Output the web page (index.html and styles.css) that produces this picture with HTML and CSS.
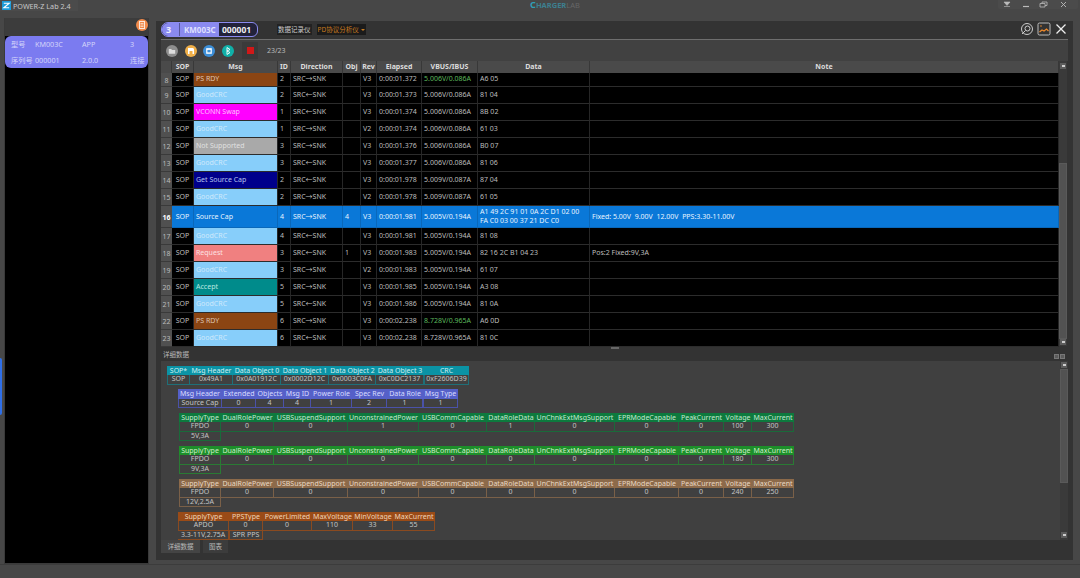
FILE: index.html
```html
<!DOCTYPE html>
<html>
<head>
  <title>POWER-Z Lab 2.4</title>
  <link rel="stylesheet" href="styles.css">
</head>
<body>
  <div class="titlebar">
    <div class="app-tab">
      <svg class="app-logo" viewBox="0 0 10 10"><rect width="10" height="10" fill="#1c9bd8"/><path d="M2 2.5H8L2 7.5H8" fill="none" stroke="#fff" stroke-width="1.2"/></svg>
      <span>POWER-Z Lab 2.4</span>
    </div>
    <div class="brand"><span class="brand-c">C</span><span class="brand-h">HARGER</span><span class="brand-l">LAB</span></div>
    <div class="win-btns">
      <svg viewBox="0 0 80 10">
        <path d="M6 2H12L9 5.5Z M6 6.5H12" fill="#bbb" stroke="#bbb" stroke-width=".6"/>
        <path d="M25 6.5H31" stroke="#bbb" stroke-width="1.2"/>
        <path d="M42 3.5H47V7H42Z M44 3.5V2H49V5.500H47" fill="none" stroke="#bbb" stroke-width=".8"/>
        <path d="M63 2L68 7M68 2L63 7" stroke="#bbb" stroke-width=".9"/>
      </svg>
    </div>
  </div>

  <div class="main">
    <aside class="side">
      <div class="side-head">
        <svg class="side-icon" viewBox="0 0 12 12"><circle cx="6" cy="6" r="6" fill="#f08a4b"/><rect x="3.400" y="2.600" width="5.200" height="6.800" fill="none" stroke="#fff" stroke-width=".8"/><path d="M4.500 4.500H7.500M4.500 6H7.500M4.500 7.500H7.500" stroke="#fff" stroke-width=".6"/></svg>
      </div>
      <div class="device-card">
        <span>型号</span><span>KM003C</span><span>APP</span><span>3</span>
        <span>序列号</span><span>000001</span><span>2.0.0</span><span>连接</span>
      </div>
    </aside>

    <div class="grip"></div>

    <section class="frame">
      <div class="frame-tabs">
        <div class="device-tab">
          <span class="tab-num">3</span>
          <span class="tab-model">KM003C</span>
          <span class="tab-serial">000001</span>
        </div>
        <span class="mode">数据记录仪</span>
        <span class="mode mode-on">PD协议分析仪<i class="caret"></i></span>
        <div class="frame-icons">
          <svg viewBox="0 0 14 14" class="ico"><circle cx="7" cy="7" r="5.500" fill="none" stroke="#ccc" stroke-width="1"/><circle cx="7.500" cy="6.500" r="2.500" fill="none" stroke="#ccc" stroke-width="1"/><path d="M5.500 8.500L2 12" stroke="#ccc" stroke-width="1"/></svg>
          <svg viewBox="0 0 14 14" class="ico"><rect x="1" y="1" width="12" height="12" rx="1.500" fill="#333" stroke="#ccc" stroke-width=".9"/><path d="M2.500 10L5 8L7 9L9.500 7L11.500 9" fill="none" stroke="#f08a2b" stroke-width="1.200"/><circle cx="4" cy="4" r=".8" fill="#f08a2b"/></svg>
          <svg viewBox="0 0 14 14" class="ico"><path d="M2.500 2.500L11.500 11.500M11.500 2.500L2.500 11.500" stroke="#eee" stroke-width="1.300"/></svg>
        </div>
      </div>

      <div class="content">
        <div class="toolbar">
          <svg viewBox="0 0 12 12" class="tool"><circle cx="6" cy="6" r="6" fill="#8e8e8e"/><path d="M2.800 4H5.200L6 5H9.200V8.800H2.800Z" fill="#ddd"/></svg>
          <svg viewBox="0 0 12 12" class="tool"><circle cx="6" cy="6" r="6" fill="#f0b04a"/><path d="M3 3H8L9 4V9H3Z" fill="#fff"/><rect x="4.500" y="6" width="3" height="3" fill="#f0b04a"/></svg>
          <svg viewBox="0 0 12 12" class="tool"><circle cx="6" cy="6" r="6" fill="#3d8fd8"/><rect x="3.200" y="3.200" width="5.600" height="5.600" fill="#fff"/><rect x="4.400" y="4.800" width="3.200" height="2.600" fill="#3d8fd8"/></svg>
          <svg viewBox="0 0 12 12" class="tool"><circle cx="6" cy="6" r="6" fill="#10b0a8"/><path d="M5 2.500V9.500L8 7.500L5 6L8 4.500Z" fill="none" stroke="#fff" stroke-width=".9"/></svg>
          <div class="stop-btn"><i></i></div>
          <span class="count">23/23</span>
        </div>

        <div class="log">
          <table class="log-table">
            <colgroup>
              <col class="c-n"><col class="c-sop"><col class="c-msg"><col class="c-id"><col class="c-dir"><col class="c-obj"><col class="c-rev"><col class="c-time"><col class="c-vbus"><col class="c-data"><col>
            </colgroup>
            <thead>
              <tr><th></th><th>SOP</th><th>Msg</th><th>ID</th><th>Direction</th><th>Obj</th><th>Rev</th><th>Elapsed</th><th>VBUS/IBUS</th><th>Data</th><th>Note</th></tr>
            </thead>
            <tbody>
              <tr class="clipped"><th>8</th><td>SOP</td><td class="m-psrdy">PS RDY</td><td>2</td><td>SRC→SNK</td><td></td><td>V3</td><td>0:00:01.372</td><td class="volt">5.006V/0.086A</td><td>A6 05</td><td></td></tr>
              <tr><th>9</th><td>SOP</td><td class="m-good">GoodCRC</td><td>2</td><td>SRC←SNK</td><td></td><td>V3</td><td>0:00:01.373</td><td>5.006V/0.086A</td><td>81 04</td><td></td></tr>
              <tr><th>10</th><td>SOP</td><td class="m-vconn">VCONN Swap</td><td>1</td><td>SRC←SNK</td><td></td><td>V3</td><td>0:00:01.374</td><td>5.006V/0.086A</td><td>8B 02</td><td></td></tr>
              <tr><th>11</th><td>SOP</td><td class="m-good">GoodCRC</td><td>1</td><td>SRC→SNK</td><td></td><td>V2</td><td>0:00:01.374</td><td>5.006V/0.086A</td><td>61 03</td><td></td></tr>
              <tr><th>12</th><td>SOP</td><td class="m-notsup">Not Supported</td><td>3</td><td>SRC→SNK</td><td></td><td>V3</td><td>0:00:01.376</td><td>5.006V/0.086A</td><td>B0 07</td><td></td></tr>
              <tr><th>13</th><td>SOP</td><td class="m-good">GoodCRC</td><td>3</td><td>SRC←SNK</td><td></td><td>V3</td><td>0:00:01.377</td><td>5.006V/0.086A</td><td>81 06</td><td></td></tr>
              <tr><th>14</th><td>SOP</td><td class="m-getcap">Get Source Cap</td><td>2</td><td>SRC←SNK</td><td></td><td>V3</td><td>0:00:01.978</td><td>5.009V/0.087A</td><td>87 04</td><td></td></tr>
              <tr><th>15</th><td>SOP</td><td class="m-good">GoodCRC</td><td>2</td><td>SRC→SNK</td><td></td><td>V2</td><td>0:00:01.978</td><td>5.009V/0.087A</td><td>61 05</td><td></td></tr>
              <tr class="selected"><th>16</th><td>SOP</td><td>Source Cap</td><td>4</td><td>SRC→SNK</td><td>4</td><td>V3</td><td>0:00:01.981</td><td>5.005V/0.194A</td><td>A1 49 2C 91 01 0A 2C D1 02 00<br>FA C0 03 00 37 21 DC C0</td><td>Fixed: 5.00V&nbsp; 9.00V&nbsp; 12.00V&nbsp; PPS:3.30-11.00V</td></tr>
              <tr><th>17</th><td>SOP</td><td class="m-good">GoodCRC</td><td>4</td><td>SRC←SNK</td><td></td><td>V3</td><td>0:00:01.981</td><td>5.005V/0.194A</td><td>81 08</td><td></td></tr>
              <tr><th>18</th><td>SOP</td><td class="m-request">Request</td><td>3</td><td>SRC←SNK</td><td>1</td><td>V3</td><td>0:00:01.983</td><td>5.005V/0.194A</td><td>82 16 2C B1 04 23</td><td>Pos:2 Fixed:9V,3A</td></tr>
              <tr><th>19</th><td>SOP</td><td class="m-good">GoodCRC</td><td>3</td><td>SRC→SNK</td><td></td><td>V2</td><td>0:00:01.983</td><td>5.005V/0.194A</td><td>61 07</td><td></td></tr>
              <tr><th>20</th><td>SOP</td><td class="m-accept">Accept</td><td>5</td><td>SRC→SNK</td><td></td><td>V3</td><td>0:00:01.985</td><td>5.005V/0.194A</td><td>A3 08</td><td></td></tr>
              <tr><th>21</th><td>SOP</td><td class="m-good">GoodCRC</td><td>5</td><td>SRC←SNK</td><td></td><td>V3</td><td>0:00:01.986</td><td>5.005V/0.194A</td><td>81 0A</td><td></td></tr>
              <tr><th>22</th><td>SOP</td><td class="m-psrdy">PS RDY</td><td>6</td><td>SRC→SNK</td><td></td><td>V3</td><td>0:00:02.238</td><td class="volt">8.728V/0.965A</td><td>A6 0D</td><td></td></tr>
              <tr><th>23</th><td>SOP</td><td class="m-good">GoodCRC</td><td>6</td><td>SRC←SNK</td><td></td><td>V3</td><td>0:00:02.238</td><td>8.728V/0.965A</td><td>81 0C</td><td></td></tr>
            </tbody>
          </table>
          <div class="vscroll vscroll-log">
            <i class="sb-btn sb-up"></i>
            <i class="sb-gap"></i>
            <i class="sb-thumb"></i>
            <i class="sb-btn sb-down"></i>
          </div>
        </div>

        <div class="detail-bar">
          <span>详细数据</span>
          <i class="detail-handle"></i>
          <div class="detail-icons"><i></i><i></i></div>
        </div>

        <div class="detail">
          <div class="packets">
            <div class="packet pk-frame">
              <b>SOP*</b><b>Msg Header</b><b>Data Object 0</b><b>Data Object 1</b><b>Data Object 2</b><b>Data Object 3</b><b>CRC</b>
              <span>SOP</span><span>0x49A1</span><span>0x0A01912C</span><span>0x0002D12C</span><span>0x0003C0FA</span><span>0xC0DC2137</span><span>0xF2606D39</span>
            </div>
            <div class="packet pk-header">
              <b>Msg Header</b><b>Extended</b><b>Objects</b><b>Msg ID</b><b>Power Role</b><b>Spec Rev</b><b>Data Role</b><b>Msg Type</b>
              <span>Source Cap</span><span>0</span><span>4</span><span>4</span><span>1</span><span>2</span><span>1</span><span>1</span>
            </div>
            <div class="packet pk-fixed pdo-teal">
              <b>SupplyType</b><b>DualRolePower</b><b>USBSuspendSupport</b><b>UnconstrainedPower</b><b>USBCommCapable</b><b>DataRoleData</b><b>UnChnkExtMsgSupport</b><b>EPRModeCapable</b><b>PeakCurrent</b><b>Voltage</b><b>MaxCurrent</b>
              <span>FPDO</span><span>0</span><span>0</span><span>1</span><span>0</span><span>1</span><span>0</span><span>0</span><span>0</span><span>100</span><span>300</span>
              <span>5V,3A</span>
            </div>
            <div class="packet pk-fixed pdo-green">
              <b>SupplyType</b><b>DualRolePower</b><b>USBSuspendSupport</b><b>UnconstrainedPower</b><b>USBCommCapable</b><b>DataRoleData</b><b>UnChnkExtMsgSupport</b><b>EPRModeCapable</b><b>PeakCurrent</b><b>Voltage</b><b>MaxCurrent</b>
              <span>FPDO</span><span>0</span><span>0</span><span>0</span><span>0</span><span>0</span><span>0</span><span>0</span><span>0</span><span>180</span><span>300</span>
              <span>9V,3A</span>
            </div>
            <div class="packet pk-fixed pdo-tan">
              <b>SupplyType</b><b>DualRolePower</b><b>USBSuspendSupport</b><b>UnconstrainedPower</b><b>USBCommCapable</b><b>DataRoleData</b><b>UnChnkExtMsgSupport</b><b>EPRModeCapable</b><b>PeakCurrent</b><b>Voltage</b><b>MaxCurrent</b>
              <span>FPDO</span><span>0</span><span>0</span><span>0</span><span>0</span><span>0</span><span>0</span><span>0</span><span>0</span><span>240</span><span>250</span>
              <span>12V,2.5A</span>
            </div>
            <div class="packet pk-apdo">
              <b>SupplyType</b><b>PPSType</b><b>PowerLimited</b><b>MaxVoltage</b><b>MinVoltage</b><b>MaxCurrent</b>
              <span>APDO</span><span>0</span><span>0</span><span>110</span><span>33</span><span>55</span>
              <span>3.3-11V,2.75A</span><span>SPR PPS</span>
            </div>
          </div>
          <div class="vscroll vscroll-detail">
            <i class="sb-btn sb-up"></i>
            <i class="sb-thumb"></i>
            <i class="sb-gap"></i>
            <i class="sb-btn sb-down"></i>
          </div>
        </div>

        <div class="bottom-tabs">
          <span class="bottom-tab active">详细数据</span>
          <span class="bottom-tab">图表</span>
        </div>
      </div>
    </section>
  </div>

  <i class="edge-mark"></i>
</body>
</html>
```

FILE: styles.css
```css
html, body {
  margin: 0;
  height: 578px;
  overflow: hidden;
}

body {
  background: #474747;
  color: #ccc;
  font-family: "Noto Sans", "Noto Sans CJK SC", sans-serif;
  font-size: 7px;
}

i {
  display: block;
  font-style: normal;
}

/* title bar */
.titlebar {
  display: flex;
  height: 17px;
  position: relative;
}

.app-tab {
  display: flex;
  align-items: center;
  gap: 2px;
  width: 78px;
  height: 11px;
  padding-left: 2px;
  box-sizing: border-box;
  background: #4b4b4b;
  font-size: 7.200px;
  color: #c8c8c8;
}

.app-logo {
  width: 9px;
  height: 9px;
}

.brand {
  margin: 0 auto;
  padding-left: 34px;
  height: 9px;
  line-height: 9px;
  font-size: 7.500px;
  font-weight: 700;
}

.brand-c { color: #2f9fb8; font-size: 9px; }
.brand-h { color: #3d7f90; }
.brand-l { color: #666; font-weight: 400; }

.win-btns {
  width: 80px;
  height: 9px;
  margin-right: 2px;
  background: #4b4b4b;
  border-radius: 0 0 2px 2px;
}

.win-btns svg {
  display: block;
  width: 80px;
  height: 10px;
}

/* main */
.main {
  display: flex;
  height: 546px;
  padding-top: 1px;
  padding-left: 4px;
  border-bottom: 1px solid #3c3c3c;
}

.side {
  width: 145px;
  display: flex;
  flex-direction: column;
  background: #000;
  border: 1px solid #3a3a3a;
  border-top: 0;
  box-sizing: border-box;
}

.side-head {
  display: flex;
  justify-content: flex-end;
  height: 18px;
  background: #3c3c3c;
  padding: 0;
}

.side-icon {
  width: 12px;
  height: 12px;
  margin: 1px 0 0;
}

.device-card {
  display: grid;
  grid-template-columns: 24px 47px 48px 1fr;
  grid-auto-rows: 16px;
  align-items: center;
  height: 32px;
  padding-left: 6px;
  background: #7b7bf0;
  border-radius: 6px;
  color: #d4d5fa;
  font-size: 7.200px;
}

.grip {
  width: 7px;
}

/* frame */
.frame {
  width: 917px;
  height: 539px;
  margin-top: 3px;
  background: #333;
  display: flex;
  flex-direction: column;
}

.frame-tabs {
  display: flex;
  align-items: flex-start;
  height: 18px;
  padding-left: 5px;
  padding-top: 1px;
  box-sizing: border-box;
}

.device-tab {
  display: flex;
  align-items: center;
  width: 97px;
  height: 15px;
  box-sizing: border-box;
  border: 1px solid #8a8af0;
  border-radius: 7px 6px 6px 7px;
  background: #22223a;
  overflow: hidden;
  font-size: 9px;
  font-weight: 700;
}

.tab-num {
  width: 18px;
  height: 100%;
  padding-left: 4px;
  box-sizing: border-box;
  background: #8a8af0;
  color: #eef;
  line-height: 13px;
  border-right: 1px solid #55559a;
}

.tab-model {
  width: 39px;
  height: 100%;
  padding-left: 4px;
  box-sizing: border-box;
  background: #8a8af0;
  color: #dfe0ff;
  line-height: 13px;
  white-space: nowrap;
  font-size: 8px;
}

.tab-serial {
  padding-left: 3px;
  color: #eee;
  font-size: 8.500px;
}

.mode {
  margin-left: 19px;
  margin-top: 2px;
  padding: 0 1px;
  background: #222;
  color: #ccc;
  font-size: 6.500px;
  line-height: 11px;
}

.mode-on {
  display: flex;
  align-items: center;
  gap: 2px;
  margin-left: 5px;
  padding: 0 1px;
  background: #1b1b1b;
  color: #c87a1e;
}

.caret {
  border: 2px solid transparent;
  border-top: 2.500px solid #c87a1e;
  margin-top: 2px;
}

.frame-icons {
  display: flex;
  gap: 3px;
  margin-left: auto;
  margin-right: 5px;
}

.ico {
  width: 14px;
  height: 14px;
}

.content {
  flex: 1;
  margin: 0 5px;
  min-height: 0;
  border-top: 1px solid #6e6e6e;
  display: flex;
  flex-direction: column;
}

.toolbar {
  display: flex;
  align-items: center;
  height: 21px;
  padding-left: 5px;
  background: #414141;
  flex: none;
}

.tool {
  width: 12px;
  height: 12px;
  margin-right: 6.500px;
}

.stop-btn {
  display: flex;
  align-items: center;
  justify-content: center;
  width: 16px;
  height: 17px;
  margin-left: 2px;
  background: #3a3a3a;
}

.stop-btn i {
  width: 7px;
  height: 7px;
  background: #d01818;
}

.count {
  margin-left: 9px;
  font-size: 7px;
  color: #bbb;
}

/* log table */
.log {
  display: flex;
  flex: none;
  height: 285px;
}

.log-table {
  width: 898px;
  table-layout: fixed;
  border-collapse: separate;
  border-spacing: 0;
  font-size: 7px;
  flex: none;
  align-self: flex-start;
}

.c-n { width: 11px; }
.c-sop { width: 22px; }
.c-msg { width: 84px; }
.c-id { width: 13px; }
.c-dir { width: 52px; }
.c-obj { width: 18px; }
.c-rev { width: 16px; }
.c-time { width: 45px; }
.c-vbus { width: 56px; }
.c-data { width: 112px; }

.log-table thead th {
  height: 12px;
  padding: 0;
  background: #4a4a4a;
  color: #ddd;
  border-right: 1px solid #383838;
  font-size: 7px;
  font-weight: 700;
  line-height: 12px;
}

.log-table tbody tr {
  height: 17px;
}

.log-table tbody tr.clipped {
  height: 14px;
}

.log-table tbody tr.selected {
  height: 22px;
}

.log-table tbody th {
  padding: 1px 0 0;
  background: #505050;
  color: #bbb;
  border-bottom: 1px solid #3a3a3a;
  font-weight: 400;
  font-size: 7px;
  line-height: 9px;
}

.log-table td {
  padding: 0 2px 1px;
  background: #000;
  color: #bdbdbd;
  border-right: 1px solid #262626;
  border-bottom: 1px solid #2c2c2c;
  white-space: nowrap;
  overflow: hidden;
  line-height: 9px;
}

.log-table .clipped td {
  padding-bottom: 3px;
}

.log-table td:first-of-type {
  text-align: center;
}

.log-table .selected td {
  background: #0a78d8;
  color: #e8f4ff;
  border-right-color: #0a68ba;
  border-bottom-color: #0a68ba;
}

.log-table .selected th {
  color: #fff;
  font-weight: 700;
}

.log-table .volt { color: #5db85d; }

/* message type colours */
.log-table .m-good { background: #87cefa; color: #cfe9fb; }
.log-table .m-psrdy { background: #8b4513; color: #dcc4b0; }
.log-table .m-vconn { background: #ff00ff; color: #ffc0ff; }
.log-table .m-notsup { background: #a9a9a9; color: #e0e0e0; }
.log-table .m-getcap { background: #00008b; color: #b8c4ee; }
.log-table .m-request { background: #f08080; color: #fde0e0; }
.log-table .m-accept { background: #008b8b; color: #b8e8e0; }

/* scrollbars */
.vscroll {
  display: flex;
  flex-direction: column;
  width: 8px;
  flex: none;
  background: #3a3a3a;
}

.sb-btn {
  flex: none;
  height: 6px;
  margin: 0 1px;
  background: #5c5c5c;
  position: relative;
}

.sb-btn::after {
  content: "";
  position: absolute;
  left: 1.500px;
  top: 2px;
  width: 3px;
  height: 1.500px;
  background: #ccc;
}

.sb-thumb {
  background: #525252;
  border: 1px solid #5a5a5a;
  box-sizing: border-box;
}

.sb-gap {
  background: #3a3a3a;
}

.vscroll-log { padding-top: 2px; box-sizing: border-box; }
.vscroll-log .sb-gap { height: 94px; }
.vscroll-log .sb-thumb { height: 176px; }

.vscroll-detail { height: 179px; padding-top: 1px; box-sizing: border-box; }
.vscroll-detail .sb-thumb { height: 114px; margin-top: 1px; }
.vscroll-detail .sb-gap { flex: 1; }
.vscroll-detail .sb-down { margin-bottom: 2px; }

/* detail */
.detail-bar {
  display: flex;
  flex: none;
  align-items: flex-end;
  height: 15px;
  padding: 0 2px 2px;
  box-sizing: border-box;
  position: relative;
  font-size: 6.500px;
  color: #b8b8b8;
}

.detail-handle {
  position: absolute;
  left: 450px;
  top: 1px;
  width: 8px;
  height: 1.500px;
  background: #666;
}

.detail-icons {
  display: flex;
  gap: 1px;
  margin-left: auto;
  margin-right: 1px;
}

.detail-icons i {
  width: 5px;
  height: 5px;
  background: #5c5c5c;
  border: 1px solid #777;
  box-sizing: border-box;
}

.detail {
  display: flex;
  flex: none;
  height: 179px;
  overflow: hidden;
}

.packets {
  width: 899px;
  flex: none;
  box-sizing: border-box;
  padding: 4.500px 0 0 6px;
  background: #404040;
  display: flex;
  flex-direction: column;
  gap: 4.500px;
  overflow: hidden;
}

.packet {
  --head: #0b93a5;
  --line: #1f6f78;
  display: grid;
  grid-auto-rows: 9.500px;
  width: max-content;
  flex: none;
  font-size: 7px;
  line-height: 9.500px;
  text-align: center;
  white-space: nowrap;
}

.packet b {
  background: var(--head);
  color: var(--text, #cfeef2);
  font-weight: 400;
  overflow: hidden;
}

.packet span {
  border: 1px solid var(--line);
  border-top: 0;
  border-left-width: 0;
  box-sizing: border-box;
  line-height: 8.500px;
  color: #c4c4c4;
  overflow: hidden;
}

.packet span:first-of-type,
.packet > span:nth-last-of-type(1) {
  border-left-width: 1px;
}

.pk-frame { grid-template-columns: 23px 43px 48px 48px 47px 48px 45px; }

.pk-header {
  --head: #5560c8;
  --line: #4a52a8;
  --text: #d8dcff;
  margin-left: 11px;
  grid-template-columns: 44px 34px 28px 27px 41px 35px 36px 35px;
}

.pk-fixed {
  margin-left: 12px;
  grid-template-columns: 42px 53px 74px 71px 68px 48px 80px 64px 45px 28px 42px;
}

.pdo-teal { --head: #0d7a3e; --line: #1a6a3a; --text: #c4e8d0; }
.pdo-green { --head: #1d8f2a; --line: #2a7a34; --text: #cdeec8; }
.pdo-tan { --head: #8c6a4a; --line: #7a6048; --text: #e8d8c4; }

.pk-apdo {
  --head: #9a4b17;
  --line: #8a4a20;
  --text: #f0d4b8;
  margin-left: 11px;
  grid-template-columns: 51px 34px 49px 41px 40px 42px;
}

.bottom-tabs {
  display: flex;
  flex: none;
  gap: 3px;
  height: 13px;
}

.bottom-tab {
  width: 25px;
  padding-top: 1px;
  background: #3c3c3c;
  text-align: center;
  font-size: 6.500px;
  color: #b8b8b8;
  line-height: 11px;
}

.bottom-tab.active {
  width: 39px;
  background: #444;
}

.edge-mark {
  position: absolute;
  left: 0;
  top: 358px;
  width: 2px;
  height: 57px;
  background: #2f6fe8;
  border-radius: 0 2px 2px 0;
}
```
